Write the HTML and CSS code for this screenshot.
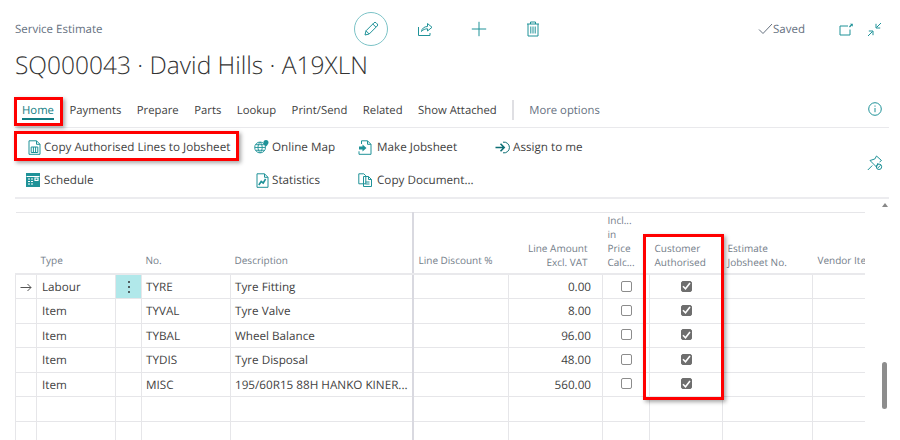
FILE: index.html
```html
<!DOCTYPE html>
<html lang="en">
<head>
  <meta charset="UTF-8" />
  <title>Service Estimate</title>
  <link rel="stylesheet" href="styles.css">
</head>
<body>
<div class="page">

  <!-- Top bar -->
  <div class="topbar">
    <div class="caption">Service Estimate</div>
    <div class="cmd cmd-edit">
      <svg width="18" height="18" viewBox="0 0 18 18"><path d="M3 15l1-4.200L12 2.800a1.500 1.500 0 0 1 2.100 0l1.100 1.100a1.500 1.500 0 0 1 0 2.100L7.200 14 3 15zM10.800 4l3.200 3.200M4 10.800L7.200 14"/></svg>
    </div>
    <div class="cmd">
      <svg width="16" height="16" viewBox="0 0 16 16"><path d="M1.500 6v8.500h11.500v-2.500"/><path d="M4.500 10.500c.3-3 2.800-5 6-5V2.500l4.500 3.800-4.500 3.700V7.800c-2.500 0-4.500.8-6 2.700z"/></svg>
    </div>
    <div class="cmd">
      <svg width="16" height="16" viewBox="0 0 16 16"><path d="M8 .8v14.400M.8 8h14.400"/></svg>
    </div>
    <div class="cmd">
      <svg width="14" height="16" viewBox="0 0 14 16"><path d="M1 3h12M4.500 3V1h5v2M2 3v12h10V3M4.800 5.500v7M7 5.500v7M9.200 5.500v7"/></svg>
    </div>
    <div class="saved">
      <svg width="15" height="12" viewBox="0 0 15 12"><path d="M1 6.500l4 4L14 1"/></svg>
      <span>Saved</span>
    </div>
    <div class="win-icons">
      <svg width="14" height="13" viewBox="0 0 14 13"><path d="M9 3H1v9h10V6.500"/><path class="solid" d="M10 3.500l2-2-1.200-.8h3v3l-.9-1.100-2 1.900z"/></svg>
      <svg width="15" height="15" viewBox="0 0 15 15"><path d="M14 1L9.500 5.500M9 1.800v4.200h4.200M1 14l4.500-4.500M6 13.200V9H1.800"/></svg>
    </div>
  </div>

  <h1 class="title">SQ000043 · David Hills · A19XLN</h1>

  <!-- Action tabs -->
  <nav class="tabs">
    <a class="tab active">Home</a>
    <a class="tab">Payments</a>
    <a class="tab">Prepare</a>
    <a class="tab">Parts</a>
    <a class="tab">Lookup</a>
    <a class="tab">Print/Send</a>
    <a class="tab">Related</a>
    <a class="tab">Show Attached</a>
    <span class="tab-sep"></span>
    <a class="tab more">More options</a>
    <svg class="info" width="14" height="14" viewBox="0 0 14 14"><circle cx="7" cy="7" r="6.300"/><path d="M7 6v4.200M7 3.500v1.200"/></svg>
  </nav>

  <div class="actions">
    <div class="action-grid">
      <div class="action">
        <svg class="inset" width="13" height="15" viewBox="0 0 13 15"><path d="M1 .8h7.500l3.500 3.500v10H1zM8.500.8v3.500H12M3.200 7h6.600v5.500H3.200zM5.400 7v5.500M7.600 7v5.500"/></svg>
        <span>Copy Authorised Lines to Jobsheet</span>
      </div>
      <div class="action">
        <svg width="15" height="14" viewBox="0 0 16 15"><circle cx="6.500" cy="8" r="5.800"/><path d="M.8 8h11.400M6.500 2.200c-3 3.500-3 8 0 11.600M6.500 2.200c3 3.500 3 8 0 11.600M1.800 5h9.400M1.800 11h9.400"/><path class="solid" d="M12.800 0a2.700 2.700 0 0 1 2.700 2.700c0 1.800-2.700 4.300-2.700 4.300s-2.700-2.500-2.700-4.300A2.700 2.700 0 0 1 12.800 0z"/></svg>
        <span>Online Map</span>
      </div>
      <div class="action">
        <svg class="outset" width="14" height="15" viewBox="0 0 14 15"><path d="M3.500 4V.8h6l3.500 3.500v10H1v-3M9.500.8v3.500H13"/><path class="solid" d="M1 6.500h3.500V4.500L8.500 8l-4 3.500v-2H1z"/></svg>
        <span>Make Jobsheet</span>
      </div>
      <div class="action">
        <svg class="dark" width="15" height="13" viewBox="0 0 15 13"><path d="M8 1.200a5.400 5.400 0 1 1 0 10.600"/><path class="thick" d="M.5 6.500h8M5.500 2.800l3.700 3.700-3.700 3.700"/></svg>
        <span>Assign to me</span>
      </div>
      <div class="action">
        <svg class="icon-sched" width="14" height="14" viewBox="0 0 14 14"><rect class="solid" width="14" height="14"/><path class="cut" d="M.5 3.500h13M2 6h2M5 6h2M9 5h3v2.500H9zM2 8.500h2M5 8.500h2M2 11h2M5 11h2"/></svg>
        <span>Schedule</span>
      </div>
      <div class="action">
        <svg class="inset" width="13" height="15" viewBox="0 0 13 15"><path d="M1 .8h7.500l3.500 3.500v10H1zM8.500.8v3.500H12"/><path class="thick" d="M2.800 12l2.400-3.500 2 1.500 2.400-4"/></svg>
        <span>Statistics</span>
      </div>
      <div class="action">
        <svg class="outset" width="14" height="14" viewBox="0 0 14 14"><path d="M.8.800h5l2 2v8H.8zM5.500 3.500h5l3 3v7h-8zM10.500 3.500v3h3M7.500 9h4M7.500 11h4"/></svg>
        <span>Copy Document...</span>
      </div>
    </div>
    <svg class="pin" width="16" height="16" viewBox="0 0 16 16"><path d="M.8 15l4.500-4.500M9.500 1L7.800 4 3 5.500l6.500 6.500L11 8M9.500 1l5 4.500-2 1.500"/><circle cx="12" cy="11.800" r="2.700"/><path d="M10.500 13.300l3-3"/></svg>
  </div>

  <!-- Lines -->
  <div class="lines">
    <div class="grid-wrap">
      <table class="grid">
        <colgroup>
          <col class="c-mark"><col class="c-type"><col class="c-menu"><col class="c-no"><col class="c-desc">
          <col class="c-disc"><col class="c-amt"><col class="c-incl"><col class="c-auth"><col class="c-est"><col class="c-vend">
        </colgroup>
        <thead>
          <tr>
            <th></th>
            <th class="one">Type</th>
            <th></th>
            <th class="one">No.</th>
            <th class="one">Description</th>
            <th class="one frozen">Line Discount %</th>
            <th class="num">Line Amount<br>Excl. VAT</th>
            <th>Incl...<br>in<br>Price<br>Calc...</th>
            <th>Customer<br>Authorised</th>
            <th>Estimate<br>Jobsheet No.</th>
            <th class="one">Vendor Ite</th>
          </tr>
        </thead>
        <tbody>
          <tr>
            <td class="mark"><svg width="12" height="9" viewBox="0 0 12 9"><path d="M.5 4.500h10.500M7.500 1l3.500 3.500L7.500 8"/></svg></td>
            <td class="kind">Labour</td>
            <td class="menu"><span class="dots"><i></i><i></i><i></i></span></td>
            <td>TYRE</td>
            <td>Tyre Fitting</td>
            <td class="frozen"></td>
            <td class="num">0.00</td>
            <td class="box"><span class="chk"></span></td>
            <td class="box"><span class="chk on"><svg width="9" height="8" viewBox="0 0 9 8"><path d="M1 4.200l2.500 2.500L8 1"/></svg></span></td>
            <td></td>
            <td></td>
          </tr>
          <tr>
            <td></td>
            <td class="kind">Item</td>
            <td></td>
            <td>TYVAL</td>
            <td>Tyre Valve</td>
            <td class="frozen"></td>
            <td class="num">8.00</td>
            <td class="box"><span class="chk"></span></td>
            <td class="box"><span class="chk on"><svg width="9" height="8" viewBox="0 0 9 8"><path d="M1 4.200l2.500 2.500L8 1"/></svg></span></td>
            <td></td>
            <td></td>
          </tr>
          <tr>
            <td></td>
            <td class="kind">Item</td>
            <td></td>
            <td>TYBAL</td>
            <td>Wheel Balance</td>
            <td class="frozen"></td>
            <td class="num">96.00</td>
            <td class="box"><span class="chk"></span></td>
            <td class="box"><span class="chk on"><svg width="9" height="8" viewBox="0 0 9 8"><path d="M1 4.200l2.500 2.500L8 1"/></svg></span></td>
            <td></td>
            <td></td>
          </tr>
          <tr>
            <td></td>
            <td class="kind">Item</td>
            <td></td>
            <td>TYDIS</td>
            <td>Tyre Disposal</td>
            <td class="frozen"></td>
            <td class="num">48.00</td>
            <td class="box"><span class="chk"></span></td>
            <td class="box"><span class="chk on"><svg width="9" height="8" viewBox="0 0 9 8"><path d="M1 4.200l2.500 2.500L8 1"/></svg></span></td>
            <td></td>
            <td></td>
          </tr>
          <tr>
            <td></td>
            <td class="kind">Item</td>
            <td></td>
            <td>MISC</td>
            <td>195/60R15 88H HANKO KINER...</td>
            <td class="frozen"></td>
            <td class="num">560.00</td>
            <td class="box"><span class="chk"></span></td>
            <td class="box"><span class="chk on"><svg width="9" height="8" viewBox="0 0 9 8"><path d="M1 4.200l2.500 2.500L8 1"/></svg></span></td>
            <td></td>
            <td></td>
          </tr>
          <tr>
            <td></td><td></td><td></td><td></td><td></td><td class="frozen"></td><td></td><td></td><td></td><td></td><td></td>
          </tr>
          <tr>
            <td></td><td></td><td></td><td></td><td></td><td class="frozen"></td><td></td><td></td><td></td><td></td><td></td>
          </tr>
        </tbody>
      </table>
    </div>
    <div class="scrollbar">
      <span class="scroll-up"></span>
      <span class="scroll-thumb"></span>
    </div>
  </div>

  <!-- Red callouts drawn over the screenshot -->
  <div class="callout call-home"></div>
  <div class="callout call-copy"></div>
  <div class="callout call-auth"></div>
</div>
</body>
</html>
```
FILE: styles.css
```css
* { box-sizing: border-box; }
body {
  margin: 0;
  background-color: #fff;
  font-family: "Open Sans", "Noto Sans", sans-serif;
  color: #3f3f3f;
  text-rendering: geometricPrecision;
  overflow: hidden;
}

svg { fill: none; stroke: #1f9298; stroke-width: 1; display: block; }
svg .solid { fill: #1f9298; stroke: none; }
svg .thick { stroke-width: 1.6; }

.page {
  position: relative;
  width: 889px;
  height: 440px;
  overflow: hidden;
}

/* top bar */
.topbar {
  display: flex;
  align-items: center;
  height: 34px;
  margin-top: 12px;
  padding-left: 15px;
}
.caption {
  width: 329px;
  font-size: 11.500px;
  color: #66717f;
  margin-top: 1px;
}
.cmd {
  width: 54px;
  height: 34px;
  display: flex;
  align-items: center;
  justify-content: center;
}
.cmd-edit {
  width: 34px;
  margin: 0 10px;
  border: 1.500px solid #7cc3c7;
  border-radius: 50%;
}
.saved {
  display: flex;
  align-items: center;
  margin-left: auto;
  font-size: 11.500px;
  color: #66717f;
}
.saved svg { stroke: #66717f; }
.win-icons {
  display: flex;
  align-items: center;
  gap: 14px;
  margin-left: 34px;
  margin-right: 7px;
}

.title {
  margin: 3px 0 0 15px;
  height: 34px;
  font-size: 24.500px;
  line-height: 34px;
  font-weight: 300;
  color: #333;
}

/* tabs */
.tabs {
  display: flex;
  align-items: center;
  gap: 15.500px;
  height: 31px;
  margin: 14px 0 0 15px;
  padding: 0 0 4px 7px;
  border-bottom: 1.500px solid #e9e9ec;
  font-size: 11.300px;
}
.tab { line-height: 15px; white-space: nowrap; }
.tab.active {
  color: #127d83;
  border-bottom: 2px solid #127d83;
  margin-top: 2px;
}
.tab.more { color: #66717f; }
.tab-sep {
  width: 1.500px;
  height: 20px;
  background-color: #dfdfe3;
}
.info { margin-left: auto; margin-right: 7px; margin-top: -2px; }

/* action bar */
.actions {
  display: flex;
  align-items: center;
  height: 71px;
  margin-left: 15px;
  padding-left: 11px;
  border-bottom: 2px solid #ececef;
  font-size: 11.700px;
}
.action-grid {
  display: grid;
  grid-template-columns: 228px 105px 136px auto;
  grid-auto-rows: 33px;
  margin-top: 2px;
}
.action {
  display: grid;
  grid-template-columns: 18px auto;
  align-items: center;
  justify-items: start;
  white-space: nowrap;
}
.action .inset { margin-left: 2px; }
.action .outset { margin-left: -1px; }
.action .dark { stroke: #0e6f75; }
.icon-sched .cut { stroke: #fff; stroke-width: 1.200; }
.pin { margin-left: auto; margin-right: 6px; }

/* grid */
.lines {
  display: flex;
  height: 242px;
  margin-left: 15px;
}
.grid-wrap {
  width: 850px;
  margin-top: 13px;
  overflow: hidden;
}
.grid {
  width: 850px;
  table-layout: fixed;
  border-collapse: collapse;
  border-top: 1px solid #e6e6e9;
  font-size: 11.700px;
}
.c-mark { width: 21px; }
.c-type { width: 79px; }
.c-menu { width: 26px; }
.c-no { width: 89px; }
.c-desc { width: 182px; }
.c-disc { width: 96px; }
.c-amt { width: 94px; }
.c-incl { width: 47px; }
.c-auth { width: 73px; }
.c-est { width: 90px; }
.c-vend { width: 53px; }

.grid th {
  height: 58px;
  padding: 0 0 4px 4px;
  vertical-align: bottom;
  text-align: left;
  font-weight: 400;
  font-size: 10px;
  line-height: 14px;
  color: #747e8a;
  border-bottom: 2px solid #e9e9ec;
  white-space: nowrap;
}
.grid th:nth-child(n+6) { padding-left: 5px; }
.grid th.one { padding-bottom: 6px; }
.grid th.num { padding-right: 15px; text-align: right; }
.grid td {
  height: 24.500px;
  padding: 1px 0 0 4px;
  border-left: 1px solid #e6e6e9;
  border-bottom: 1px solid #e6e6e9;
  white-space: nowrap;
}
.grid td.kind { padding-left: 5px; }
.grid .frozen { border-left: 2px solid #d9d9e0; }
.grid td.num { text-align: right; padding-right: 11px; }
.grid td.mark { padding: 1px 0 0 4px; }
.mark svg { stroke: #555; }
.grid td.menu { padding: 0; background-color: #b1e8ea; }
.dots { display: flex; flex-direction: column; align-items: center; gap: 3px; }
.dots i { width: 2px; height: 2px; background-color: #333; border-radius: 50%; }
.grid td.box { padding: 0; }
.chk {
  display: flex;
  align-items: center;
  justify-content: center;
  width: 11px;
  height: 11px;
  margin: -1px auto 0;
  border: 1px solid #8c8c8c;
  border-radius: 2px;
}
.chk.on { background-color: #6e6e6e; border-color: #6e6e6e; }
.chk.on svg { stroke: #fff; stroke-width: 1.600; }

/* scrollbar */
.scrollbar {
  position: relative;
  flex: 1;
  display: flex;
  flex-direction: column;
  align-items: flex-end;
  padding-right: 2px;
}
.scroll-up {
  width: 0;
  height: 0;
  margin-top: 4px;
  margin-right: -1px;
  border-left: 3px solid transparent;
  border-right: 3px solid transparent;
  border-bottom: 4px solid #888;
}
.scroll-thumb {
  width: 5px;
  height: 47px;
  margin-top: 155px;
  border-radius: 3px;
  background-color: #8d8d8d;
}

/* callouts */
.callout {
  position: absolute;
  border: 3px solid #f00;
  box-shadow: 2px 2px 4px rgba(0,0,0,0.35);
}
.call-home { left: 14px; top: 97px; width: 49px; height: 29px; }
.call-copy { left: 14px; top: 131px; width: 225px; height: 30px; }
.call-auth { left: 643px; top: 234px; width: 81px; height: 166px; }
```
